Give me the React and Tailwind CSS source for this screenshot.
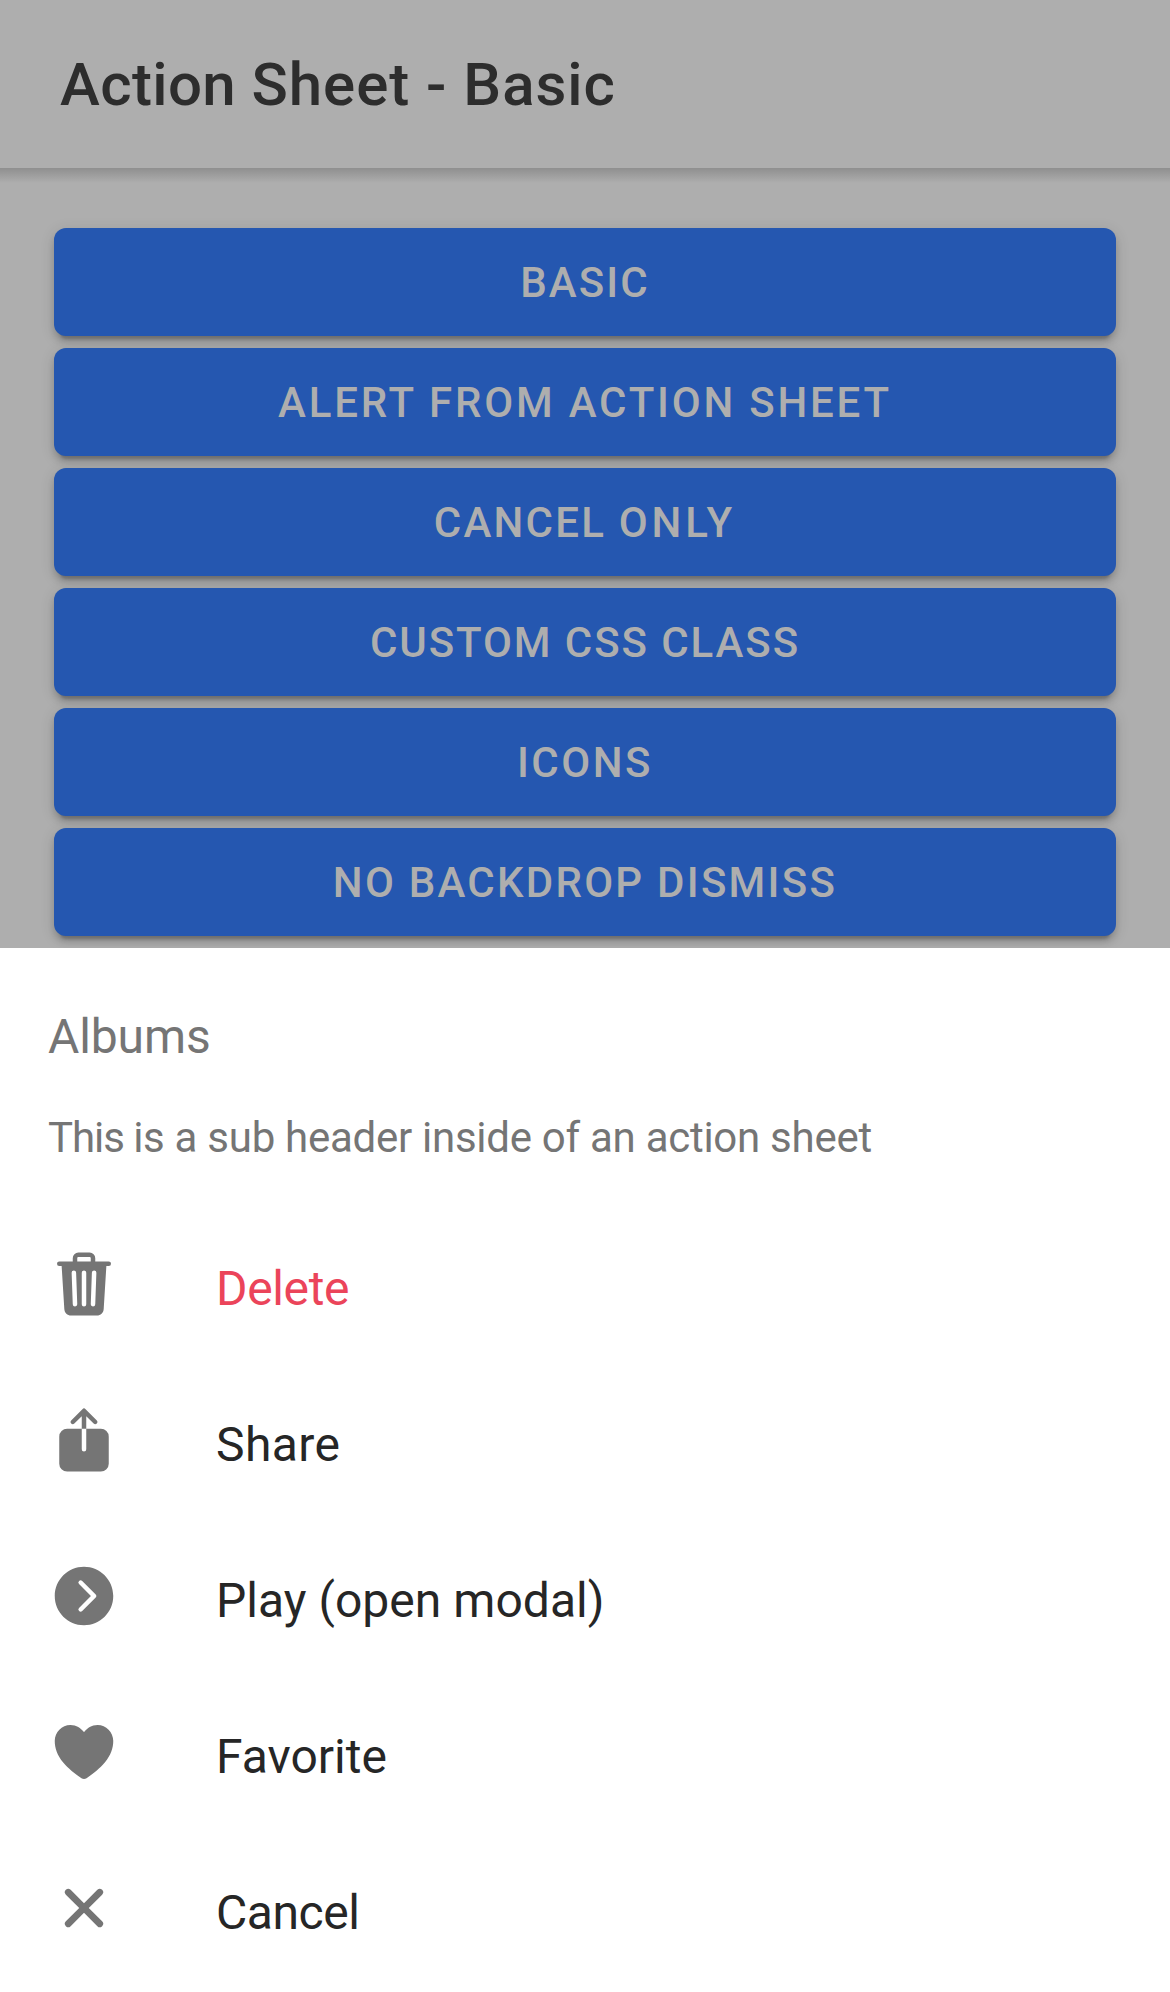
import React from "react";
import { IoTrash, IoShare, IoHeart, IoClose, IoChevronForwardCircle } from "react-icons/io5";

const buttons = [
  { label: "Basic", tracking: "tracking-[0.68px]" },
  { label: "Alert from action sheet", tracking: "tracking-[0.93px]" },
  { label: "Cancel only", tracking: "tracking-[0.74px]", lastWord: "tracking-[1.3px]" },
  { label: "Custom CSS class", tracking: "tracking-[0.64px]" },
  { label: "Icons", tracking: "tracking-[0.84px]" },
  { label: "No backdrop dismiss", tracking: "tracking-[0.75px]" },
];

const actions = [
  { label: "Delete", Icon: IoTrash, style: "text-[#eb445a] tracking-[-0.12px]" },
  { label: "Share", Icon: IoShare, style: "text-[#262626] tracking-[0.14px]" },
  { label: "Play (open modal)", Icon: IoChevronForwardCircle, style: "text-[#262626] tracking-[0.01px]" },
  { label: "Favorite", Icon: IoHeart, style: "text-[#262626]" },
  { label: "Cancel", Icon: IoClose, style: "text-[#262626] tracking-[-0.14px]" },
];

function ButtonLabel({ label, lastWord }) {
  if (!lastWord) return label;
  const split = label.lastIndexOf(" ") + 1;
  return (
    <>
      {label.slice(0, split)}
      <span className={lastWord}>{label.slice(split)}</span>
    </>
  );
}

// The phone layout is 390x664 and is shown at three times its size.
export default function App() {
  return (
    <div className="h-[1992px] w-[1170px] overflow-hidden">
      <div className="flex h-[664px] w-[390px] origin-top-left scale-[3] flex-col overflow-hidden bg-[#aeaeae] font-['Roboto',sans-serif]">
        <header className="flex h-14 shrink-0 items-center px-5">
          <h1 className="text-[20px] font-medium leading-[24px] tracking-[0.32px] text-[#2d2d2d]">
            <span className="tracking-[0.13px]">Action </span>Sheet - Basic
          </h1>
        </header>
        <div className="h-[5px] shrink-0 bg-linear-to-b from-[#8f8f8f] to-[#aeaeae]" />
        <main className="flex h-[255px] shrink-0 flex-col gap-1 overflow-hidden px-[18px] pt-[15px]">
          {buttons.map(({ label, tracking, lastWord }) => (
            <button
              key={label}
              className={`h-9 shrink-0 rounded bg-[#2557b0] text-[14px] font-medium uppercase text-[#aeaeae] shadow-[0_3px_1px_-2px_rgba(0,0,0,0.2),0_2px_2px_0_rgba(0,0,0,0.14),0_1px_5px_0_rgba(0,0,0,0.12)] ${tracking}`}
            >
              <ButtonLabel label={label} lastWord={lastWord} />
            </button>
          ))}
        </main>
        <section className="flex-1 bg-white">
          <div className="h-[88px] px-4 pt-5 text-[#757575]">
            <h2 className="text-[16px] leading-[19px] tracking-[-0.04px]">Albums</h2>
            <p className="pt-4 text-[14px] leading-[16px] tracking-[-0.09px]">
              <span className="tracking-[-0.36px]">This </span>is a sub header inside of an action sheet
            </p>
          </div>
          <ul>
            {actions.map(({ label, Icon, style }) => (
              <li key={label} className="flex h-[52px] items-center px-4">
                <Icon className="mr-8 mb-1 size-6 text-[#757575]" />
                <span className={`mb-0.5 text-[16px] leading-[19px] ${style}`}>{label}</span>
              </li>
            ))}
          </ul>
        </section>
      </div>
    </div>
  );
}
